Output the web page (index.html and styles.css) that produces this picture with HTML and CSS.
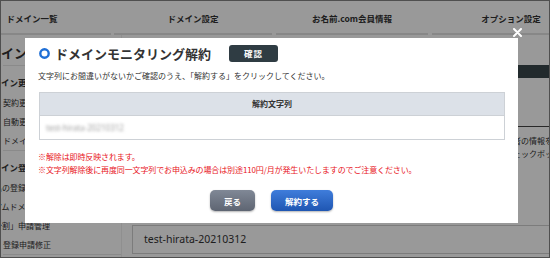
FILE: index.html
```html
<!doctype html>
<html lang="ja">
	<head>
		<meta charset="utf-8">
		<title>ドメインモニタリング解約</title>
		<link rel="stylesheet" href="styles.css">
	</head>

	<body>
		<div class="screen">
			<ul class="gnav">
				<li class="gnav-item">ドメイン一覧</li>
				<li class="gnav-item">ドメイン設定</li>
				<li class="gnav-item">お名前.com会員情報</li>
				<li class="gnav-item">オプション設定</li>
			</ul>

			<div class="layout">
				<aside class="side">
					<h2 class="side-title">ドメイン設定</h2>
					<div class="side-group">
						<h3 class="side-head">ドメイン更新</h3>
						<ul class="side-list">
							<li>契約更新</li>
							<li>自動更新設定</li>
							<li>ドメイン一括更新</li>
						</ul>
					</div>
					<div class="side-group">
						<h3 class="side-head">ドメイン登録</h3>
						<ul class="side-list">
							<li class="in-4">ホスト名の登録</li>
							<li class="in-4">プレミアムドメイン</li>
							<li class="in-2">「分割」申請管理</li>
							<li>登録申請修正</li>
						</ul>
					</div>
				</aside>

				<main class="main">
					<div class="main-bar"></div>
					<div class="main-box"></div>
					<p class="main-note">登録者の情報を変更する場合は<br>「チェックボックス」を選択してください。</p>
					<div class="field">test-hirata-20210312</div>
				</main>
			</div>

			<div class="overlay"></div>

			<div class="modal">
				<span class="modal-close">
					<svg width="9" height="9" viewBox="0 0 9 9"><path d="M1 1 L8 8 M8 1 L1 8" stroke="#fff" stroke-width="2" stroke-linecap="round"/></svg>
				</span>

				<div class="modal-title">
					<svg class="modal-icon" width="11" height="11" viewBox="0 0 11 11"><circle cx="5.5" cy="5.5" r="4.2" fill="#fff" stroke="#1f6fd6" stroke-width="2.4"/></svg>
					<h1>ドメインモニタリング解約</h1>
					<span class="badge">確認</span>
				</div>

				<p class="modal-lead">文字列にお間違いがないかご確認のうえ、「解約する」をクリックしてください。</p>

				<table class="modal-table">
					<tr><th>解約文字列</th></tr>
					<tr><td><span class="blur">test-hirata-20210312</span></td></tr>
				</table>

				<div class="cautions">
					<p class="caution">※解除は即時反映されます。</p>
					<p class="caution">※文字列解除後に再度同一文字列でお申込みの場合は別途110円/月が発生いたしますのでご注意ください。</p>
				</div>

				<div class="modal-buttons">
					<button class="btn btn-back">戻る</button>
					<button class="btn btn-submit">解約する</button>
				</div>
			</div>
		</div>
	</body>
</html>
```

FILE: styles.css
```css
html, body {
	margin:0;
	padding:0;
	font-family:"Noto Sans CJK JP", "Noto Sans", sans-serif;
	color:#333;
}

ul, h1, h2, h3, p {
	margin:0;
	padding:0;
}

ul {
	list-style:none;
}

.screen {
	position:relative;
	width:550px;
	height:258px;
	box-sizing:border-box;
	border:1px solid #4f4f4f;
	background:#fff;
	overflow:hidden;
}

/* global nav */
.gnav {
	display:flex;
	margin-left:-48px;
	height:34px;
}

.gnav-item {
	flex:none;
	width:158px;
	margin-right:4px;
	border-bottom:2px solid #e2e2e2;
	text-align:center;
	font-size:8.5px;
	font-weight:bold;
	line-height:34px;
	white-space:nowrap;
}

.gnav-item:nth-child(1) { margin-right:3px; }
.gnav-item:nth-child(3) { width:152px; }

/* page */
.layout {
	display:flex;
}

.side {
	flex:none;
	width:118px;
	padding-left:2px;
	border-right:1px solid #eee;
	height:222px;
	overflow:hidden;
	white-space:nowrap;
}

.side-title {
	height:31px;
	padding-top:9px;
	box-sizing:border-box;
	font-size:13px;
	line-height:18px;
	text-indent:-28px;
	border-bottom:1px solid #e6e6e6;
}

.side-group {
	padding-top:7px;
	border-bottom:1px solid #e6e6e6;
}

.side-head {
	font-size:8.5px;
	line-height:18px;
	margin-bottom:2px;
	text-indent:-19px;
}

.side-list li {
	font-size:8px;
	line-height:19px;
}

.side-list .in-2 { text-indent:-17px; }
.side-list .in-4 { text-indent:-33px; }

.main {
	flex:1;
	padding-left:10px;
	white-space:nowrap;
}

.main-bar {
	margin-top:30px;
	height:13px;
	background:#3a464b;
}

.main-box {
	height:48px;
	border-bottom:1px solid #444;
}

.main-note {
	margin:7px 0 0 365px;
	font-size:8px;
	line-height:13px;
}

.field {
	margin-top:65px;
	height:29px;
	box-sizing:border-box;
	border:1px solid #cfcfcf;
	padding-left:11px;
	font-family:"Noto Sans", sans-serif;
	font-size:10.5px;
	line-height:27px;
	color:#333;
}

/* modal */
.overlay {
	position:absolute;
	top:0;
	left:0;
	right:0;
	bottom:0;
	background:rgba(0,0,0,0.4);
}

.modal {
	position:absolute;
	left:24px;
	top:37px;
	width:493px;
	height:185px;
	box-sizing:border-box;
	padding:0 13px;
	background:#fff;
}

.modal-close {
	position:absolute;
	left:488px;
	top:-10px;
	width:9px;
	height:9px;
	display:block;
}

.modal-close svg {
	display:block;
}

.modal-title {
	display:flex;
	align-items:center;
	height:17px;
	padding-top:7px;
}

.modal-icon {
	flex:none;
	margin-left:1px;
}

.modal-title h1 {
	margin-left:5px;
	font-size:13px;
	font-weight:bold;
	line-height:17px;
	color:#333;
}

.badge {
	margin-left:18px;
	width:49px;
	height:17px;
	border-radius:3px;
	background:#2f3c43;
	color:#fff;
	font-size:8.5px;
	font-weight:bold;
	line-height:17px;
	text-align:center;
	letter-spacing:1px;
}

.modal-lead {
	margin-top:8px;
	font-size:8px;
	line-height:12px;
}

.modal-table {
	margin:10px 0 0 1px;
	width:466px;
	border-collapse:collapse;
}

.modal-table th,
.modal-table td {
	padding:0;
	border:1px solid #cdd1d6;
	font-size:8px;
}

.modal-table th {
	background:#dce1e8;
	line-height:22px;
	font-weight:bold;
	text-align:center;
}

.modal-table td {
	line-height:23px;
	padding-left:6px;
	text-align:left;
}

.blur {
	color:#a0a0a0;
	font-family:"Noto Sans", sans-serif;
	font-size:8px;
	filter:blur(1.4px);
}

.cautions {
	margin-top:10px;
}

.caution {
	font-size:8px;
	line-height:13px;
	color:#e8141c;
	white-space:nowrap;
	letter-spacing:-0.12px;
}

.modal-buttons {
	display:flex;
	justify-content:center;
	gap:16px;
	margin-top:14px;
}

.btn {
	height:21px;
	border:0;
	border-radius:5px;
	padding:0;
	color:#fff;
	font-family:inherit;
	font-size:8.5px;
	font-weight:bold;
	box-shadow:0 1px 2px rgba(0,0,0,0.3);
}

.btn-back {
	width:45px;
	background:linear-gradient(#808896, #5e6572);
}

.btn-submit {
	width:62px;
	background:linear-gradient(#3f7ddb, #1f56b2);
}
```
